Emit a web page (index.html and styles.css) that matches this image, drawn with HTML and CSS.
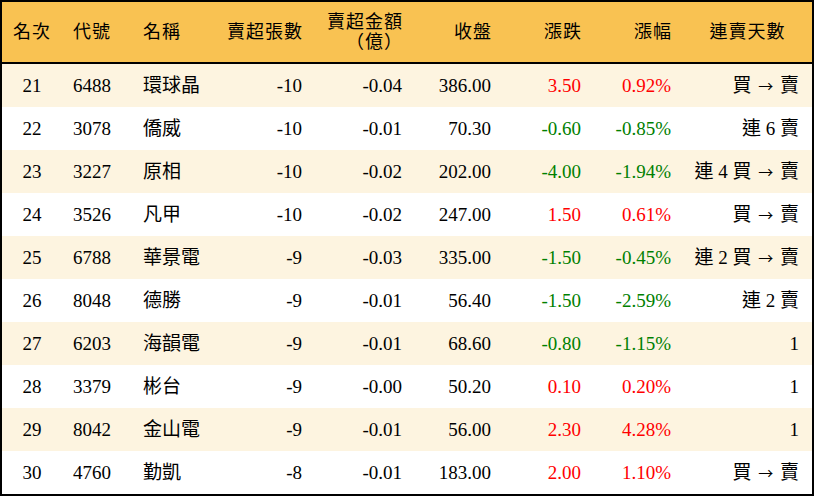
FILE: index.html
```html
<!DOCTYPE html>
<html lang="zh-Hant">
<head>
<meta charset="utf-8">
<title>賣超排行</title>
<link rel="stylesheet" href="styles.css">
</head>
<body>
<div class="board">
<table class="rank">
<colgroup>
<col class="c-rank"><col class="c-code"><col class="c-name"><col class="c-qty"><col class="c-amt"><col class="c-close"><col class="c-chg"><col class="c-pct"><col class="c-days">
</colgroup>
<thead>
<tr>
<th class="center">名次</th>
<th class="left">代號</th>
<th class="left">名稱</th>
<th class="right">賣超張數</th>
<th class="right two">賣超金額<br>（億）</th>
<th class="right">收盤</th>
<th class="right">漲跌</th>
<th class="right">漲幅</th>
<th class="center">連賣天數</th>
</tr>
</thead>
<tbody>
<tr class="odd"><td class="center">21</td><td class="left">6488</td><td class="left">環球晶</td><td class="right">-10</td><td class="right">-0.04</td><td class="right">386.00</td><td class="right up">3.50</td><td class="right up">0.92%</td><td class="right days">買 <span class="arrow">→</span> 賣</td></tr>
<tr><td class="center">22</td><td class="left">3078</td><td class="left">僑威</td><td class="right">-10</td><td class="right">-0.01</td><td class="right">70.30</td><td class="right down">-0.60</td><td class="right down">-0.85%</td><td class="right days">連 6 賣</td></tr>
<tr class="odd"><td class="center">23</td><td class="left">3227</td><td class="left">原相</td><td class="right">-10</td><td class="right">-0.02</td><td class="right">202.00</td><td class="right down">-4.00</td><td class="right down">-1.94%</td><td class="right days">連 4 買 <span class="arrow">→</span> 賣</td></tr>
<tr><td class="center">24</td><td class="left">3526</td><td class="left">凡甲</td><td class="right">-10</td><td class="right">-0.02</td><td class="right">247.00</td><td class="right up">1.50</td><td class="right up">0.61%</td><td class="right days">買 <span class="arrow">→</span> 賣</td></tr>
<tr class="odd"><td class="center">25</td><td class="left">6788</td><td class="left">華景電</td><td class="right">-9</td><td class="right">-0.03</td><td class="right">335.00</td><td class="right down">-1.50</td><td class="right down">-0.45%</td><td class="right days">連 2 買 <span class="arrow">→</span> 賣</td></tr>
<tr><td class="center">26</td><td class="left">8048</td><td class="left">德勝</td><td class="right">-9</td><td class="right">-0.01</td><td class="right">56.40</td><td class="right down">-1.50</td><td class="right down">-2.59%</td><td class="right days">連 2 賣</td></tr>
<tr class="odd"><td class="center">27</td><td class="left">6203</td><td class="left">海韻電</td><td class="right">-9</td><td class="right">-0.01</td><td class="right">68.60</td><td class="right down">-0.80</td><td class="right down">-1.15%</td><td class="right days">1</td></tr>
<tr><td class="center">28</td><td class="left">3379</td><td class="left">彬台</td><td class="right">-9</td><td class="right">-0.00</td><td class="right">50.20</td><td class="right up">0.10</td><td class="right up">0.20%</td><td class="right days">1</td></tr>
<tr class="odd"><td class="center">29</td><td class="left">8042</td><td class="left">金山電</td><td class="right">-9</td><td class="right">-0.01</td><td class="right">56.00</td><td class="right up">2.30</td><td class="right up">4.28%</td><td class="right days">1</td></tr>
<tr><td class="center">30</td><td class="left">4760</td><td class="left">勤凱</td><td class="right">-8</td><td class="right">-0.01</td><td class="right">183.00</td><td class="right up">2.00</td><td class="right up">1.10%</td><td class="right days">買 <span class="arrow">→</span> 賣</td></tr>
</tbody>
</table>
</div>
</body>
</html>
```
FILE: styles.css
```css
html, body {
  margin: 0;
  padding: 0;
  background: #ffffff;
}
.board {
  width: 814px;
  height: 496px;
  box-sizing: border-box;
  border: 2px solid #000;
  background: #fff;
  overflow: hidden;
}
.rank {
  width: 810px;
  border-collapse: separate;
  border-spacing: 0;
  table-layout: fixed;
  font-family: "Liberation Serif", "Noto Sans CJK TC", serif;
  font-size: 19px;
  color: #000;
}
.c-rank { width: 60px; }
.c-code { width: 70px; }
.c-name { width: 80px; }
.c-qty { width: 102px; }
.c-amt { width: 100px; }
.c-close { width: 89px; }
.c-chg { width: 90px; }
.c-pct { width: 90px; }
.c-days { width: 129px; }

.rank thead tr {
  height: 62px;
}
.rank th {
  background: #f9c252;
  border-bottom: 2px solid #000;
  font-weight: normal;
  font-size: 18px;
  letter-spacing: 1px;
  line-height: 20px;
  padding: 0 11px 0 11px;
  vertical-align: middle;
  white-space: nowrap;
}
.rank tbody tr {
  height: 43px;
}
.rank td {
  padding: 0 12px 0 11px;
  line-height: 22px;
  vertical-align: middle;
  white-space: nowrap;
}
.rank tbody tr.odd td {
  background: #fdf4e0;
}
.center { text-align: center; }
.left { text-align: left; }
.right { text-align: right; }
.rank .center { padding-left: 0; padding-right: 0; }
.rank .days { padding-right: 13px; }
.arrow {
  font-family: "Noto Sans CJK TC", sans-serif;
  font-size: 15px;
  margin: 0 2px;
}
.up { color: #ff0000; }
.down { color: #008000; }
```
